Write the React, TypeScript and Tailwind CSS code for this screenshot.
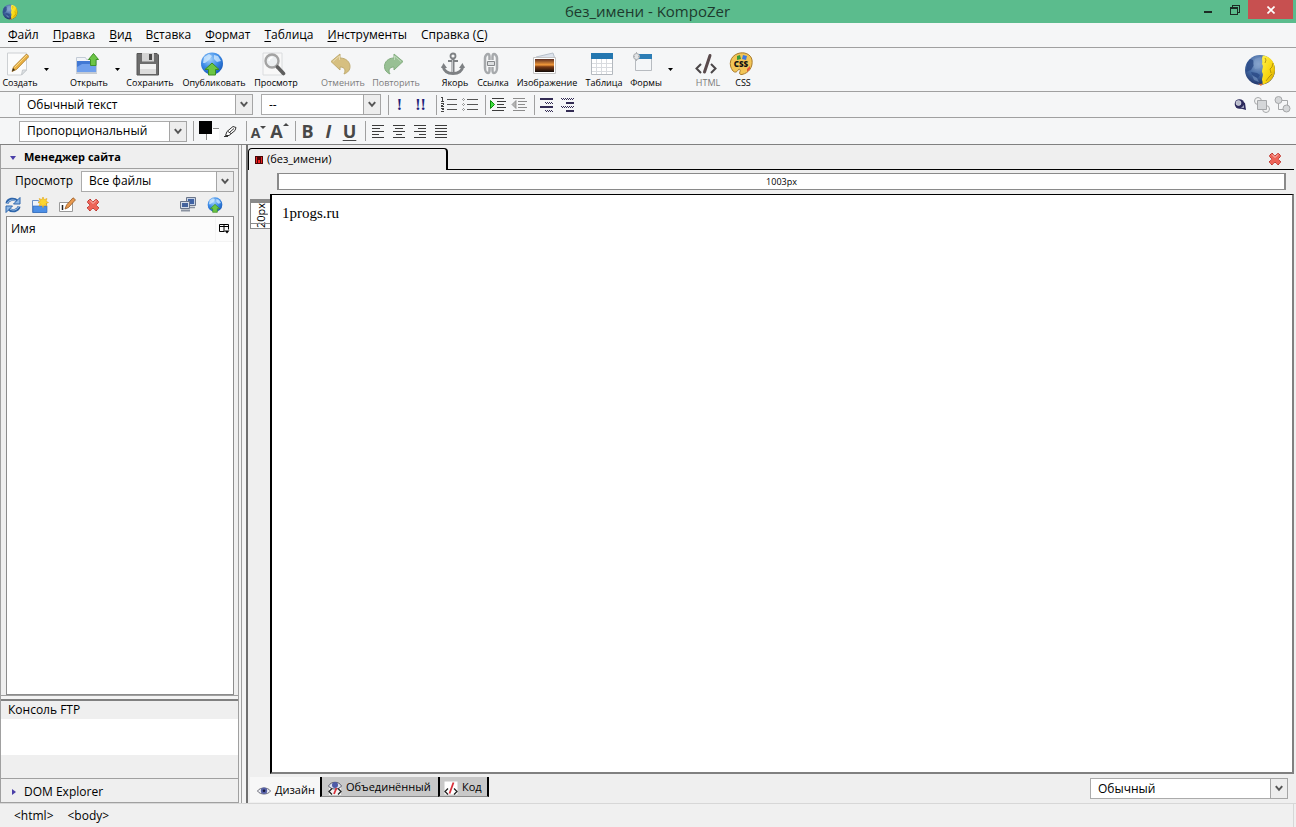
import React from 'react';

const UI_FONT = "font-['Open_Sans','Noto_Sans',sans-serif]";

/* ---------- Icons ---------- */

function GlobeLogo({ className }: { className: string }) {
  return (
    <svg viewBox="0 0 32 32" className={className} aria-hidden="true">
      <defs>
        <radialGradient id="logoBlue" cx="0.45" cy="0.3" r="0.75">
          <stop offset="0" stopColor="#8fabd2" />
          <stop offset="0.5" stopColor="#446aa4" />
          <stop offset="1" stopColor="#1a2c60" />
        </radialGradient>
        <linearGradient id="logoYellow" x1="0" x2="1" y1="0" y2="1">
          <stop offset="0" stopColor="#fff04a" />
          <stop offset="0.6" stopColor="#f8d40c" />
          <stop offset="1" stopColor="#b98a05" />
        </linearGradient>
      </defs>
      <circle cx="16" cy="16" r="15" fill="url(#logoBlue)" />
      <path d="M3 9l3-4 3 1 1 5-3 5-5 2zM7 18l6 1 3 2-2 3-5-1z" fill="#2b4a86" opacity=".8" />
      <path d="M11 5l6-2 2 5-3 6-5 1-2-5zM8 21l5 3 2 4-5-2z" fill="#7f9fca" opacity=".55" />
      <path d="M19 1.500C26 2 31 8 31 16c0 7-5 13-12 14.500-1-1.500 0-3-1-4.500 0-3 2-5 0-8 0-4 2-5 0-8 1-3-1-5 1-8.500z" fill="url(#logoYellow)" />
      <path d="M21 4l1 2-1 3M29 9l-1 4-2 2 1 4M28 20l-3 3-3 4" fill="none" stroke="#a5840c" strokeWidth=".8" />
      <path d="M14 29.500l2 .5 3-.5-2 2.500z" fill="#e2703a" />
    </svg>
  );
}

function NewIcon() {
  return (
    <svg width="22" height="24" viewBox="0 0 22 24" aria-hidden="true">
      <path d="M.5 1h19v17l-5 5H.5z" fill="#fbfbfb" stroke="#cdd0d3" />
      <path d="M14.500 23l1-5h4z" fill="#dfe2e5" stroke="#c4c8cc" />
      <path d="M5 19.500l1.500-4.500L19.500 2l2.500 2.500L9.500 17.500z" fill="#eab042" stroke="#a87724" strokeWidth=".8" />
      <path d="M7.500 15.500L20 3" stroke="#f9dc8a" strokeWidth="1" />
      <path d="M5 19.500l1-3.500 2 2z" fill="#3b3020" />
    </svg>
  );
}

function OpenIcon() {
  return (
    <svg width="24" height="24" viewBox="0 0 24 24" aria-hidden="true">
      <path d="M1.500 5.500h9l1 2h10v13h-20z" fill="#f1f4f8" stroke="#c3cbd6" />
      <path d="M2 9h19v11H2z" fill="#4178d4" />
      <path d="M2 15l5-3h14v8H2z" fill="#6f9fec" />
      <path d="M1 21.500h21" stroke="#c6cad0" />
      <path d="M18.500 1.500l5 6H21v6h-5.500v-6h-2z" fill="#6cc546" stroke="#3f9228" />
    </svg>
  );
}

function SaveIcon() {
  return (
    <svg width="24" height="24" viewBox="0 0 24 24" aria-hidden="true">
      <path d="M1 1.500h20l1.500 1.500v20H1z" fill="#6d6d6d" stroke="#565656" />
      <path d="M6 1h12v8.500H6z" fill="#d4d4d4" />
      <path d="M13 2h3v6h-3z" fill="#4a4a4a" />
      <path d="M4 12h16v10H4z" fill="#f2f2f2" />
      <path d="M4 17h16v5H4z" fill="#dcdcdc" />
    </svg>
  );
}

function PublishIcon({ className }: { className: string }) {
  return (
    <svg viewBox="0 0 24 24" className={className} aria-hidden="true">
      <defs>
        <radialGradient id="pubBlue" cx="0.4" cy="0.3" r="0.8">
          <stop offset="0" stopColor="#a8d4fb" />
          <stop offset="0.5" stopColor="#3b8be8" />
          <stop offset="1" stopColor="#124fae" />
        </radialGradient>
      </defs>
      <circle cx="12" cy="11.500" r="11" fill="url(#pubBlue)" />
      <path d="M4 5l5-3 3 2-3 4-4 3-2 0zM14 3l4 1 3 5-4 1-3-3z" fill="#d5ecff" opacity=".75" />
      <path d="M12 11l7 6.500h-3.500V23h-7v-5.500H5z" fill="#6cc644" stroke="#3c8d22" />
    </svg>
  );
}

function PreviewIcon() {
  return (
    <svg width="24" height="24" viewBox="0 0 24 24" aria-hidden="true">
      <path d="M1 1h19v22H1z" fill="#f8f8f8" stroke="#dadcde" />
      <circle cx="10" cy="9" r="6.500" fill="#eceff1" stroke="#a3a3a3" strokeWidth="2.400" />
      <path d="M7 9a3.500 3.500 0 0 1 3.500-3.500" stroke="#fff" strokeWidth="1.500" fill="none" />
      <path d="M15.500 15l6 6.500" stroke="#5e5e5e" strokeWidth="3.600" strokeLinecap="round" />
    </svg>
  );
}

function UndoIcon() {
  return (
    <svg width="22" height="24" viewBox="0 0 22 24" aria-hidden="true">
      <path d="M1 9.500L10 2v4c6 0 10 4 10 8.500 0 3.500-2 6-6 7.500 2-4 1-7-4-7v3z" fill="#d6bf80" stroke="#c0ab70" />
      <path d="M3 9.500L9.500 4v4" fill="none" stroke="#e8d9ae" />
    </svg>
  );
}

function RedoIcon() {
  return (
    <svg width="22" height="24" viewBox="0 0 22 24" aria-hidden="true">
      <path d="M20 9.500L11 2v4c-6 0-9.500 4-9.500 8.500 0 3.500 2 6 5.500 7.500-2-4-1-7 4-7v3z" fill="#98c094" stroke="#84ad80" />
      <path d="M18 9.500L11.500 4v4" fill="none" stroke="#bfdbbc" />
    </svg>
  );
}

function AnchorIcon() {
  return (
    <svg width="26" height="24" viewBox="0 0 26 24" aria-hidden="true">
      <g fill="none" stroke="#7e8184">
        <circle cx="13" cy="4" r="2.500" strokeWidth="1.800" />
        <path d="M13 7v14" strokeWidth="3" />
        <path d="M8 9h10" strokeWidth="2" />
        <path d="M3 14c1 5 5 7.500 10 7.500S22 19 23 14" strokeWidth="3" />
      </g>
      <path d="M1 16l2.500-5L7 16zM25 16l-2.500-5L19 16z" fill="#7e8184" />
      <path d="M12.500 8v12" stroke="#c2c5c8" />
    </svg>
  );
}

function LinkIcon() {
  return (
    <svg width="16" height="24" viewBox="0 0 16 24" aria-hidden="true">
      <g fill="none" stroke="#a6a9ac" strokeWidth="2.500">
        <path d="M6.500 8V5c0-2-.5-3-1.500-3S2 3.500 2 6v10c0 3 1.500 5 3 5s1.500-1 1.500-3v-3" />
        <path d="M9.500 8V5c0-2 .5-3 1.500-3s3 1.500 3 4v10c0 3-1.500 5-3 5s-1.500-1-1.500-3v-3" />
      </g>
      <path d="M4.500 9.500h7v4h-7z" fill="#dcdee0" stroke="#85888b" />
    </svg>
  );
}

function ImageIcon() {
  return (
    <svg width="24" height="24" viewBox="0 0 24 24" aria-hidden="true">
      <defs>
        <linearGradient id="sunset" x1="0" x2="0" y1="0" y2="1">
          <stop offset="0" stopColor="#5b2c20" />
          <stop offset="0.45" stopColor="#f49a3a" />
          <stop offset="0.6" stopColor="#7a3a14" />
          <stop offset="1" stopColor="#120a08" />
        </linearGradient>
      </defs>
      <path d="M3 5l17-4 2 6H3z" fill="#dde3ec" stroke="#b8c0ca" />
      <path d="M.5 5.500h22v16H.5z" fill="#fff" stroke="#c4c4c4" />
      <path d="M2 7h19v13H2z" fill="url(#sunset)" />
    </svg>
  );
}

function TableIcon() {
  return (
    <svg width="22" height="24" viewBox="0 0 22 24" aria-hidden="true">
      <path d="M.5 1.500h21v21H.5z" fill="#fff" stroke="#b3b8be" />
      <path d="M0 1h22v6H0z" fill="#2477b0" />
      <path d="M1 11.500h20M1 15.500h20M1 19.500h20M5.500 7v15M10.500 7v15M15.500 7v15" stroke="#d8dbdf" />
    </svg>
  );
}

function FormIcon() {
  return (
    <svg width="22" height="24" viewBox="0 0 22 24" aria-hidden="true">
      <path d="M2.500 2.500h16v16h-16z" fill="#f4f6f8" stroke="#b7bbc0" />
      <path d="M5 2h14v5H5z" fill="#2c7db5" />
      <circle cx="3.500" cy="4.500" r="3" fill="#e2e4e6" stroke="#a6a9ac" />
      <path d="M3.500 0v2M3.500 7v2M0 4.500h2M5 4.500h2" stroke="#b0b3b6" />
    </svg>
  );
}

function HtmlIcon() {
  return (
    <svg width="22" height="24" viewBox="0 0 22 24" aria-hidden="true">
      <path d="M6 12l-4.500 4.500L6 21M16 12l4.500 4.500L16 21" fill="none" stroke="#4a4648" strokeWidth="2" />
      <path d="M15 3.500L9.500 20" stroke="#5a4a4c" strokeWidth="3" strokeLinecap="round" />
    </svg>
  );
}

function CssIcon() {
  return (
    <svg width="24" height="24" viewBox="0 0 24 24" aria-hidden="true">
      <path d="M9 1.500C15-.5 22 2 23 8c1 7-3 13-10 14.500-2 .5-3-1-2-3 1-2-1-3-2-1.500-1 2-3 3-5 1-5-6-3-15 5-17.500z" fill="#f2c557" stroke="#a87a2a" />
      <path d="M8 4l3-1 1 4-4 1z" fill="#3a9a3a" />
      <path d="M14 3l4 1-1 4-4-1z" fill="#3c78e0" />
      <path d="M18 17l3-3 0 3-3 3z" fill="#e2553c" />
      <text x="12" y="15" textAnchor="middle" fontSize="8" fontWeight="800" fill="#111" fontFamily="Open Sans, sans-serif">CSS</text>
    </svg>
  );
}

function CaretDown() {
  return (
    <svg width="5" height="3" viewBox="0 0 5 3" aria-hidden="true">
      <path d="M0 0h5L2.500 3z" fill="#000" />
    </svg>
  );
}

function NumberedListIcon() {
  return (
    <svg width="17" height="15" viewBox="0 0 17 15" aria-hidden="true" shapeRendering="crispEdges">
      <path d="M7 2.500h10M7 7.500h10M7 12.500h10" stroke="#555" />
      <path d="M1 .5h1M2.500 0v4M1 4.500h3M1 6.500h3M3.500 7v1M1 8.500h2M1 9.500h3M1 11.500h3M2 12.500h2M1 14.500h3" stroke="#444" />
    </svg>
  );
}

function BulletListIcon() {
  return (
    <svg width="16" height="15" viewBox="0 0 16 15" aria-hidden="true">
      <path d="M5 2.500h11M5 7.500h11M5 12.500h11" stroke="#555" shapeRendering="crispEdges" />
      <path d="M1.500 1.500l1 1-1 1-1-1zM1.500 6.500l1 1-1 1-1-1zM1.500 11.500l1 1-1 1-1-1z" fill="#fff" stroke="#555" strokeWidth=".7" />
    </svg>
  );
}

function IndentIcon({ outdent = false }: { outdent?: boolean }) {
  const line = outdent ? '#8c8c8c' : '#3c3c3c';
  return (
    <svg width="16" height="13" viewBox="0 0 16 13" aria-hidden="true">
      <path d="M2 .5h12M7 3.500h9M7 6.500h7M7 9.500h9M2 12.500h12" stroke={line} shapeRendering="crispEdges" />
      {outdent ? (
        <path d="M5 2.500v8L1 6.500z" fill="#b4b4b4" stroke="#8c8c8c" strokeWidth=".8" />
      ) : (
        <path d="M.5 2.500v8l4-4z" fill="#3fe03f" stroke="#0a8a0a" />
      )}
    </svg>
  );
}

function DefinitionIcon({ description = false }: { description?: boolean }) {
  const full = 'M0 1h13M0 9h13';
  const short = 'M5 5h8M5 13h8';
  return (
    <svg width="13" height="14" viewBox="0 0 13 14" aria-hidden="true" shapeRendering="crispEdges">
      <path d={description ? short : full} stroke="#332c54" strokeWidth="2" />
      {/* checkered rows: two one-pixel dashes out of step */}
      <g stroke="#332c54" strokeDasharray="1 1">
        <path d={description ? 'M0 .5h13M0 8.500h13' : 'M5 4.500h8M5 12.500h8'} />
        <path d={description ? 'M1 1.500h12M1 9.500h12' : 'M6 5.500h7M6 13.500h7'} />
      </g>
    </svg>
  );
}

type AlignKind = 'left' | 'center' | 'right' | 'justify';

const ALIGN_PATHS: Record<AlignKind, string> = {
  left: 'M0 .5h12M0 3.500h8M0 6.500h12M0 9.500h7M0 12.500h12',
  center: 'M0 .5h12M2 3.500h8M0 6.500h12M3 9.500h6M0 12.500h12',
  right: 'M0 .5h12M4 3.500h8M0 6.500h12M5 9.500h7M0 12.500h12',
  justify: 'M0 .5h12M0 3.500h12M0 6.500h12M0 9.500h12M0 12.500h12',
};

function AlignIcon({ kind }: { kind: AlignKind }) {
  return (
    <svg width="12" height="13" viewBox="0 0 12 13" aria-hidden="true" shapeRendering="crispEdges">
      <path d={ALIGN_PATHS[kind]} stroke="#3c3c3c" />
    </svg>
  );
}

function ColorIcon() {
  return (
    <svg width="21" height="20" viewBox="0 0 21 20" aria-hidden="true" shapeRendering="crispEdges">
      <path d="M7 7h13v12H7z" fill="#fff" />
      <path d="M7.500 13v6M14 7.500h6" stroke="#888" />
      <path d="M0 0h13v13H0z" fill="#000" />
    </svg>
  );
}

function HighlighterIcon() {
  return (
    <svg width="13" height="13" viewBox="0 0 13 13" aria-hidden="true">
      <path d="M1.500 10.500l1.500-4 6-5 3 1-1 3-6 5z" fill="#fff" stroke="#333" />
      <path d="M4 6.500l3 2M5.500 7.500l4.500-4" stroke="#333" fill="none" />
      <path d="M0 11.500h4" stroke="#333" />
    </svg>
  );
}

function CrossIcon() {
  return (
    <svg width="14" height="14" viewBox="0 0 14 14" aria-hidden="true">
      <path d="M4 1l3 3 3-3 3 3-3 3 3 3-3 3-3-3-3 3-3-3 3-3-3-3z" fill="#ee6458" stroke="#b82f28" strokeDasharray="1.500 .5" />
      <path d="M4 2.500l3 3 3-3" fill="none" stroke="#f9c4bd" />
    </svg>
  );
}

function RefreshIcon() {
  return (
    <svg width="16" height="16" viewBox="0 0 16 16" aria-hidden="true">
      <g fill="none" stroke="#2f66ab" strokeWidth="3.200">
        <path d="M2 6.500C3 2 9 1 12 4" />
        <path d="M14 9.500c-1 4.500-7 5.500-10 2.500" />
      </g>
      <path d="M15 .5V7H8.500zM1 15.500V9h6.500z" fill="#8fb8e6" stroke="#2f66ab" />
      <path d="M2.500 6C4 3 8 2 11 4M13.500 10c-1.500 3-5.500 4-8.500 2" fill="none" stroke="#a9cbf0" />
    </svg>
  );
}

function NewFolderIcon() {
  return (
    <svg width="17" height="16" viewBox="0 0 17 16" aria-hidden="true">
      <path d="M.5 3.500h6l1 2h7v10H.5z" fill="#eef3fa" stroke="#6a90c6" />
      <path d="M1 9h14v6.500H1z" fill="#4c8fe6" stroke="#2f66b5" strokeWidth=".6" />
      <path d="M11 0l1.200 2.700L15 1.500l-1 2.800 2.500 1.200-2.500 1 1 2.500-3-1-1 2.500L9.800 8 7 9l1.200-2.500L6 5.500l2.200-1.200-1-2.800 2.600 1.200z" fill="#fbd530" stroke="#e0a318" strokeWidth=".6" />
    </svg>
  );
}

function RenameIcon() {
  return (
    <svg width="17" height="15" viewBox="0 0 17 15" aria-hidden="true">
      <path d="M.5 5.500h13v9H.5z" fill="#fff" stroke="#9a9a9a" />
      <path d="M3.500 8v5" stroke="#222" strokeWidth="1.500" />
      <path d="M6 12l1.500-4L14 .8l2.500 2L9.500 10.500z" fill="#e89a50" stroke="#95571f" strokeWidth=".8" />
    </svg>
  );
}

function ComputersIcon() {
  return (
    <svg width="16" height="15" viewBox="0 0 16 15" aria-hidden="true">
      <path d="M6.500 .5h9v8h-9z" fill="#c6d2e4" stroke="#6a7488" />
      <path d="M8 2h6v5H8z" fill="#3f62a4" />
      <path d="M8 10.500h7" stroke="#8a92a0" strokeWidth="1.500" />
      <path d="M.5 4.500h9v7h-9z" fill="#d5dce8" stroke="#6a7488" />
      <path d="M2 6h6v4H2z" fill="#45639c" />
      <path d="M1 13.500h9" stroke="#8a92a0" strokeWidth="2" />
    </svg>
  );
}

function EyeIcon() {
  return (
    <svg width="14" height="10" viewBox="0 0 14 10" aria-hidden="true">
      <path d="M.5 5C3 1 11 1 13.500 5 11 9 3 9 .5 5z" fill="#eef0f6" stroke="#6c6c78" />
      <circle cx="7" cy="4.800" r="3.200" fill="#5660a6" />
      <circle cx="7" cy="4.800" r="1.300" fill="#16183c" />
    </svg>
  );
}

function CodeIcon({ eye = false }: { eye?: boolean }) {
  return (
    <svg width="14" height="14" viewBox="0 0 14 14" aria-hidden="true">
      {eye ? (
        <>
          <path d="M1 7h12v7H1z" fill="#f4f4f4" />
          <path d="M.5 5C3 0 11 0 13.500 5 11 9 3 9 .5 5z" fill="#dfe3f0" stroke="#5c5c68" />
          <circle cx="7" cy="4" r="3" fill="#4e5aa6" />
        </>
      ) : (
        <path d="M.5 .5h13v13H.5z" fill="#fff" />
      )}
      <path d="M4 7.500L1 10.500l3 3M10 7.500l3 3-3 3" fill="none" stroke="#222" strokeWidth="1.300" />
      <path d={eye ? 'M8.500 7L6 13' : 'M9.500 1.500L5.500 12.500'} stroke="#d8303a" strokeWidth="1.800" />
    </svg>
  );
}

function ColumnPickerIcon() {
  return (
    <svg width="11" height="10" viewBox="0 0 11 10" aria-hidden="true">
      <path d="M.5 .5h9v5M.5 .5v7h5M.5 2.500h9M5 .5v7" fill="none" stroke="#000" />
      <path d="M5.500 6.500h5L8 9.500z" fill="#000" />
    </svg>
  );
}

function LayerIcon() {
  return (
    <svg width="13" height="12" viewBox="0 0 13 12" aria-hidden="true">
      <circle cx="5.500" cy="5" r="4.800" fill="#2c2a5c" />
      <path d="M7 2l4 2 1 7-7-2z" fill="#2c2a5c" />
      <circle cx="4.500" cy="4" r="2.500" fill="#b9bccb" stroke="#e9e9f2" strokeWidth=".6" />
      <path d="M7 9l3-3v3z" fill="#9fa2bc" />
    </svg>
  );
}

function ForwardIcon() {
  return (
    <svg width="16" height="16" viewBox="0 0 16 16" aria-hidden="true">
      <circle cx="4" cy="4" r="3.500" fill="#f4f4f4" stroke="#a5a7a9" />
      <circle cx="12" cy="12" r="3.500" fill="#f4f4f4" stroke="#a5a7a9" />
      <path d="M3.500 3.500h9v9h-9z" fill="#d5d7d9" stroke="#a5a7a9" />
    </svg>
  );
}

function BackwardIcon() {
  return (
    <svg width="17" height="17" viewBox="0 0 17 17" aria-hidden="true">
      <path d="M4.500 4.500h9v9h-9z" fill="none" stroke="#a5a7a9" />
      <circle cx="4.500" cy="4" r="3.500" fill="#d5d7d9" stroke="#a5a7a9" />
      <circle cx="12.500" cy="12.500" r="3.500" fill="#d5d7d9" stroke="#a5a7a9" />
    </svg>
  );
}

/* ---------- Controls ---------- */

interface SelectBoxProps {
  label: string;
  value: string;
  className: string;
}

function SelectBox({ label, value, className }: SelectBoxProps) {
  return (
    <div className={`relative h-[21px] shrink-0 ${className}`}>
      <select
        aria-label={label}
        defaultValue={value}
        className="block h-full w-full appearance-none border border-[#ababab] bg-white pr-5 pl-[7px] text-xs leading-none text-black outline-none"
      >
        <option>{value}</option>
      </select>
      <span className="pointer-events-none absolute inset-y-0 right-0 flex w-[18px] items-center justify-center border border-[#a5a5a5] bg-[#ededed]">
        <svg width="8" height="7" viewBox="0 0 8 7" aria-hidden="true">
          <path d="M.8 1.200L4 4.800l3.200-3.600" fill="none" stroke="#555" strokeWidth="2" />
        </svg>
      </span>
    </div>
  );
}

interface ToolButtonProps {
  label: string;
  icon: React.ReactNode;
  width: string;
  disabled?: boolean;
}

function ToolButton({ label, icon, width, disabled }: ToolButtonProps) {
  return (
    <button
      disabled={disabled}
      className={`flex h-full shrink-0 flex-col items-center pt-1 text-black disabled:text-[#7c7c7c] ${width}`}
    >
      <span className="mr-1 flex h-[25px] items-start">{icon}</span>
      <span className="text-[9px] leading-3 whitespace-nowrap">{label}</span>
    </button>
  );
}

function DropButton({ label, width }: { label: string; width: string }) {
  return (
    <button aria-label={label} className={`flex h-full shrink-0 items-center justify-center ${width}`}>
      <CaretDown />
    </button>
  );
}

function IconButton({ label, children }: { label: string; children: React.ReactNode }) {
  return (
    <button aria-label={label} className="flex h-5 w-[21px] shrink-0 items-center justify-center">
      {children}
    </button>
  );
}

function Separator() {
  return <span className="mr-px ml-[5px] h-5 w-px shrink-0 bg-[#a0a0a0]" />;
}

/* ---------- Bars ---------- */

const MENU = [
  { before: '', key: 'Ф', after: 'айл' },
  { before: '', key: 'П', after: 'равка' },
  { before: '', key: 'В', after: 'ид' },
  { before: 'В', key: 'с', after: 'тавка' },
  { before: '', key: 'Ф', after: 'ормат' },
  { before: '', key: 'Т', after: 'аблица' },
  { before: '', key: 'И', after: 'нструменты' },
  { before: 'Справка (', key: 'C', after: ')' },
];

function TitleBar() {
  return (
    <header className="flex h-[23px] items-start justify-between bg-[#5bbc8d]">
      <div className="flex h-full flex-1 items-center pl-0.5">
        <GlobeLogo className="size-4" />
      </div>
      <h1 className="text-[15px] leading-[23px] text-[#1d3a2d]">без_имени - KompoZer</h1>
      <div className="flex flex-1 justify-end pr-[3px]">
        <button aria-label="Свернуть" className="flex h-[19px] w-[26px] items-center justify-center">
          <span className="mt-1 h-0.5 w-2 bg-[#1c2b24]" />
        </button>
        <button aria-label="Восстановить" className="flex h-[19px] w-[27px] items-center justify-center">
          <svg width="10" height="10" viewBox="0 0 10 10" aria-hidden="true" shapeRendering="crispEdges">
            <path d="M2.500 2V.5h7v7H8" fill="none" stroke="#1c2b24" />
            <path d="M.5 2.500h7v7h-7zM.5 3.500h7" fill="none" stroke="#1c2b24" />
          </svg>
        </button>
        <button aria-label="Закрыть" className="flex h-[19px] w-[45px] items-center justify-center bg-[#c75050]">
          <svg width="8" height="8" viewBox="0 0 8 8" aria-hidden="true">
            <path d="M.5 .5l7 7M7.500 .5l-7 7" stroke="#fff" strokeWidth="1.600" />
          </svg>
        </button>
      </div>
    </header>
  );
}

function MenuBar() {
  return (
    <nav className="flex h-[25px] items-center gap-3.5 border-b border-[#a0a0a0] px-2">
      {MENU.map((item) => (
        <button key={item.before + item.key + item.after} className="text-xs leading-4 whitespace-nowrap">
          {item.before}
          <span className="underline underline-offset-2">{item.key}</span>
          {item.after}
        </button>
      ))}
    </nav>
  );
}

function MainToolbar() {
  return (
    <div className="flex h-11 items-center border-b border-[#a0a0a0]">
      <ToolButton label="Создать" icon={<NewIcon />} width="w-10" />
      <DropButton label="Создать: варианты" width="w-3" />
      <span className="w-4" />
      <ToolButton label="Открыть" icon={<OpenIcon />} width="w-[42px]" />
      <DropButton label="Открыть: варианты" width="w-[14px]" />
      <ToolButton label="Сохранить" icon={<SaveIcon />} width="w-[52px]" />
      <ToolButton label="Опубликовать" icon={<PublishIcon className="size-6" />} width="w-[76px]" />
      <ToolButton label="Просмотр" icon={<PreviewIcon />} width="w-12" />
      <span className="w-5" />
      <ToolButton label="Отменить" icon={<UndoIcon />} width="w-[46px]" disabled />
      <ToolButton label="Повторить" icon={<RedoIcon />} width="w-[60px]" disabled />
      <span className="w-[14px]" />
      <ToolButton label="Якорь" icon={<AnchorIcon />} width="w-[30px]" />
      <ToolButton label="Ссылка" icon={<LinkIcon />} width="w-[46px]" />
      <ToolButton label="Изображение" icon={<ImageIcon />} width="w-[62px]" />
      <ToolButton label="Таблица" icon={<TableIcon />} width="w-[52px]" />
      <ToolButton label="Формы" icon={<FormIcon />} width="w-8" />
      <DropButton label="Формы: варианты" width="w-4" />
      <span className="w-4" />
      <ToolButton label="HTML" icon={<HtmlIcon />} width="w-7" disabled />
      <ToolButton label="CSS" icon={<CssIcon />} width="w-[42px]" />
      <GlobeLogo className="mr-5 ml-auto size-8" />
    </div>
  );
}

function FormatToolbar() {
  return (
    <div className="flex h-[26px] items-center border-b border-[#a0a0a0] pr-[3px] pl-[19px]">
      <SelectBox label="Формат абзаца" value="Обычный текст" className="mr-2 w-[234px]" />
      <SelectBox label="Класс" value="--" className="w-[120px]" />
      <span className="ml-[7px] h-5 w-px bg-[#a0a0a0]" />
      <IconButton label="Выделение">
        <b className="font-['Liberation_Serif',serif] text-base leading-none text-[#1f1f7a]">!</b>
      </IconButton>
      <IconButton label="Сильное выделение">
        <b className="font-['Liberation_Serif',serif] text-base leading-none text-[#1f1f7a]">!!</b>
      </IconButton>
      <Separator />
      <IconButton label="Нумерованный список"><NumberedListIcon /></IconButton>
      <IconButton label="Маркированный список"><BulletListIcon /></IconButton>
      <Separator />
      <IconButton label="Увеличить отступ"><IndentIcon /></IconButton>
      <IconButton label="Уменьшить отступ"><IndentIcon outdent /></IconButton>
      <Separator />
      <IconButton label="Термин"><DefinitionIcon /></IconButton>
      <IconButton label="Определение"><DefinitionIcon description /></IconButton>
      <div className="ml-auto flex">
        <IconButton label="Слой"><LayerIcon /></IconButton>
        <IconButton label="На передний план"><ForwardIcon /></IconButton>
        <IconButton label="На задний план"><BackwardIcon /></IconButton>
      </div>
    </div>
  );
}

function StyleToolbar() {
  return (
    <div className="flex h-[27px] items-center border-b border-[#808080] pl-[19px] text-[#484848]">
      <SelectBox label="Шрифт" value="Пропорциональный" className="w-[168px]" />
      <span className="ml-1.5 h-5 w-px bg-[#a0a0a0]" />
      <button aria-label="Цвет текста" className="ml-[5px] flex items-center">
        <ColorIcon />
      </button>
      <IconButton label="Цвет выделения"><HighlighterIcon /></IconButton>
      <Separator />
      <IconButton label="Уменьшить шрифт">
        <span className="mt-1 text-sm leading-none font-bold">A</span>
        <svg width="6" height="12" viewBox="0 0 6 12" aria-hidden="true"><path d="M0 1h6L3 4z" fill="#484848" /></svg>
      </IconButton>
      <IconButton label="Увеличить шрифт">
        <span className="text-lg leading-none font-bold">A</span>
        <svg width="6" height="16" viewBox="0 0 6 16" aria-hidden="true"><path d="M0 3h6L3 0z" fill="#484848" /></svg>
      </IconButton>
      <Separator />
      <IconButton label="Полужирный"><b className="text-lg leading-none">B</b></IconButton>
      <IconButton label="Курсив"><b className="text-lg leading-none italic">I</b></IconButton>
      <IconButton label="Подчёркнутый"><b className="text-lg leading-none underline underline-offset-2">U</b></IconButton>
      <Separator />
      <IconButton label="По левому краю"><AlignIcon kind="left" /></IconButton>
      <IconButton label="По центру"><AlignIcon kind="center" /></IconButton>
      <IconButton label="По правому краю"><AlignIcon kind="right" /></IconButton>
      <IconButton label="По ширине"><AlignIcon kind="justify" /></IconButton>
    </div>
  );
}

/* ---------- Sidebar ---------- */

function Sidebar() {
  return (
    <aside className="flex w-[239px] shrink-0 flex-col border-x border-[#a0a0a0] bg-[#efefef]">
      <button className="flex h-6 items-center gap-2 border-b border-[#a0a0a0] pt-0.5 pl-[9px] text-[11px] font-bold">
        <svg width="6" height="4" viewBox="0 0 6 4" aria-hidden="true"><path d="M0 0h6L3 4z" fill="#4a3fa8" /></svg>
        Менеджер сайта
      </button>
      <div className="flex h-6 items-center justify-between pr-1 pl-[14px]">
        <span className="text-xs leading-5">Просмотр</span>
        <SelectBox label="Просмотр" value="Все файлы" className="w-[153px]" />
      </div>
      <div className="flex h-[23px] items-center pr-[11px] pl-1">
        <button aria-label="Обновить" className="w-[27px]"><RefreshIcon /></button>
        <button aria-label="Новая папка" className="w-[27px]"><NewFolderIcon /></button>
        <button aria-label="Переименовать" className="w-[27px]"><RenameIcon /></button>
        <button aria-label="Удалить" className="w-[27px]"><CrossIcon /></button>
        <button aria-label="Настройки сайта" className="ml-auto w-[27px]"><ComputersIcon /></button>
        <button aria-label="Опубликовать" className="w-5"><PublishIcon className="size-4" /></button>
      </div>
      <div className="mr-1 ml-[5px] flex-1 border border-[#8c8c8c] bg-white">
        <table className="w-full">
          <thead>
            <tr className="h-6 border-b border-[#f4f4f4] bg-[#fcfcfc]">
              <th className="pt-px pl-1 text-left text-xs font-normal">Имя</th>
              <th className="w-[18px] border-l border-[#f4f4f4]">
                <button aria-label="Выбор столбцов" className="mx-auto block"><ColumnPickerIcon /></button>
              </th>
            </tr>
          </thead>
        </table>
      </div>
      <div className="h-1.5 border-t border-b-2 border-t-[#a0a0a0] border-b-[#808080] bg-[#f4f4f4]" />
      <h2 className="h-[18px] pl-[7px] text-xs leading-[18px]">Консоль FTP</h2>
      <div className="h-9 bg-white" />
      <div className="h-6 border-b border-[#a0a0a0]" />
      <button className="flex h-6 items-center gap-2 border-b border-[#a0a0a0] pt-0.5 pl-[11px] text-xs">
        <svg width="4" height="6" viewBox="0 0 4 6" aria-hidden="true"><path d="M0 0v6l4-3z" fill="#4a3fa8" /></svg>
        DOM Explorer
      </button>
    </aside>
  );
}

/* ---------- Editor ---------- */

function Editor() {
  return (
    <main className="flex min-w-0 flex-1 flex-col border-l-2 border-[#707070] bg-[#efefef] pr-0.5">
      <div className="flex h-[25px] items-stretch">
        <button className="mt-[3px] flex w-[200px] items-center gap-1 rounded-t border-t border-r-2 border-l border-black bg-[#efefef] pl-1.5 text-[11px]">
          <svg width="8" height="8" viewBox="0 0 8 8" aria-hidden="true" shapeRendering="crispEdges">
            <path d="M0 0h8v8H0z" fill="#4a0606" />
            <path d="M1 1h1v6H1zM6 1h1v6H6zM3 4h2v3H3z" fill="#f02020" />
          </svg>
          (без_имени)
        </button>
        <div className="flex flex-1 items-center justify-end border-b border-black pr-3">
          <button aria-label="Закрыть вкладку" className="mt-1"><CrossIcon /></button>
        </div>
      </div>
      <div className="mt-[3px] mr-2 ml-[29px] flex h-[17px] items-center justify-center border-x-2 border-y border-[#8a8a8a] bg-white text-[9px] leading-none">
        1003px
      </div>
      <div className="mt-1 flex flex-1">
        <div className="w-[22px] shrink-0 pt-[5px] pl-0.5">
          <div className="relative flex h-[30px] w-5 flex-col items-center justify-end border-t-4 border-b border-l border-[#8a8a8a] bg-white">
            <span className="rotate-180 text-[11px] leading-none [writing-mode:vertical-rl]">20px</span>
            <span className="absolute inset-x-0 bottom-1 h-px bg-[#8a8a8a]" />
          </div>
        </div>
        <textarea
          aria-label="Документ"
          defaultValue="1progs.ru"
          className="flex-1 resize-none border-2 border-t border-t-black border-r-[#808080] border-b-[#808080] border-l-black bg-white px-2.5 pt-2 font-['Liberation_Serif',serif] text-[15px] leading-5 text-black outline-none"
        />
      </div>
      <div className="flex h-[29px] items-start pt-[3px]">
        <button className="ml-0.5 flex h-[25px] w-[70px] items-center gap-1 bg-[#f7f7f7] pt-0.5 pl-[7px] text-[11px]">
          <EyeIcon />
          Дизайн
        </button>
        <button className="flex h-5 w-[118px] items-center gap-1 border-b border-l-2 border-b-[#8a8a8a] border-l-black bg-[#c8c8c8] pt-0.5 pl-1.5 text-[11px]">
          <CodeIcon eye />
          Объединённый
        </button>
        <button className="flex h-5 w-[51px] items-center gap-1 border-r-2 border-b border-l-2 border-x-black border-b-[#8a8a8a] bg-[#c8c8c8] pt-0.5 pl-1 text-[11px]">
          <CodeIcon />
          Код
        </button>
        <SelectBox label="Режим тегов" value="Обычный" className="mt-px mr-1.5 ml-auto w-[198px]" />
      </div>
    </main>
  );
}

export default function App() {
  return (
    <div className={`flex min-h-screen flex-col bg-[#f5f6f7] text-black ${UI_FONT}`}>
      <TitleBar />
      <MenuBar />
      <MainToolbar />
      <FormatToolbar />
      <StyleToolbar />

      <div className="flex flex-1 bg-[#f4f4f4]">
        <Sidebar />
        <div className="ml-0.5 w-[5px] border-l border-[#a0a0a0]" />
        <Editor />
      </div>

      {/* Status bar */}
      <footer className="flex h-6 items-center gap-3.5 border-t border-[#d7d7d7] bg-[#f0f0f0] px-[14px] text-xs">
        <button>&lt;html&gt;</button>
        <button>&lt;body&gt;</button>
        <span className="-mr-3 ml-auto h-full w-px bg-[#d7d7d7]" />
      </footer>
    </div>
  );
}
